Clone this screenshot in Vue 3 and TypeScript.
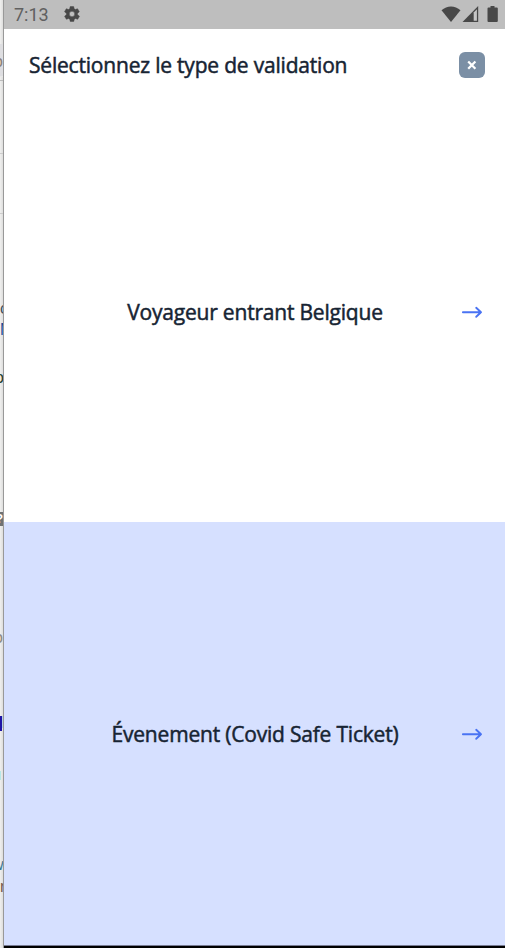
<script setup lang="ts">
interface Choice {
  id: string
  label: string
}

interface Fragment {
  text: string
  top: number
  left: number
  color: string
}

const choices: Choice[] = [
  { id: 'traveller', label: 'Voyageur entrant Belgique' },
  { id: 'event', label: 'Évenement (Covid Safe Ticket)' },
]

// Ends of the lines of the page that lies behind the device window.
const fragments: Fragment[] = [
  { text: 'o', top: 52, left: -6, color: '#8b8178' },
  { text: 'c', top: 299, left: 0, color: '#40505e' },
  { text: 'M', top: 320, left: 0, color: '#174a9c' },
  { text: 'o', top: 368, left: -5, color: '#24402c' },
  { text: 'o', top: 628, left: -6, color: '#8e8a80' },
  { text: 'd', top: 713, left: -6, color: '#1a0fb0' },
  { text: 'w', top: 855, left: -8, color: '#3c7898' },
  { text: 'r', top: 877, left: 0, color: '#76594e' },
]
</script>

<template>
  <div class="desktop">
    <div class="behind" aria-hidden="true">
      <i class="toolbar"></i>
      <i class="panel"></i>
      <i class="divider"></i>
      <span
        v-for="f in fragments"
        :key="f.top"
        class="fragment"
        :style="{ top: f.top + 'px', left: f.left + 'px', color: f.color }"
      >{{ f.text }}</span>
      <b class="help">?</b>
      <i class="mark"></i>
      <i class="cyan"></i>
    </div>

    <main class="phone">
      <div class="status">
        <span class="time">7:13</span>
        <svg class="gear" width="18" height="18" viewBox="0 0 24 24">
          <path fill="#484848" stroke="#484848" stroke-width="0.6" d="M19.4 13a7.8 7.8 0 0 0 0-2l2.1-1.7a.5.5 0 0 0 .1-.6l-2-3.5a.5.5 0 0 0-.6-.2l-2.5 1a7.3 7.3 0 0 0-1.7-1l-.4-2.6a.5.5 0 0 0-.5-.4h-4a.5.5 0 0 0-.5.4L9 5a7.7 7.7 0 0 0-1.7 1l-2.5-1a.5.5 0 0 0-.6.2l-2 3.5a.5.5 0 0 0 .1.6L4.500 11a7.900 7.900 0 0 0 0 2l-2.100 1.700a.5.5 0 0 0-.1.6l2 3.500c.1.2.4.3.6.2l2.500-1a7.300 7.300 0 0 0 1.700 1l.4 2.600c0 .2.2.4.5.4h4c.2 0 .5-.2.5-.4L15 19a7.700 7.700 0 0 0 1.700-1l2.500 1c.2.1.5 0 .6-.2l2-3.500a.5.5 0 0 0-.1-.6zM12 15.600a3.600 3.600 0 1 1 0-7.200 3.600 3.600 0 0 1 0 7.200z" />
        </svg>
        <svg class="signals" width="58" height="18" viewBox="0 0 58 18">
          <path fill="#484848" d="M0.500 4.300C6-.9 14-.9 19.500 4.300L10 16z" />
          <path fill="#484848" d="M21.500 16L37.200 0V16z" />
          <path fill="#c6c6c6" d="M32.700 6.400L35.900 3.200V14.700H32.700z" />
          <path fill="#484848" d="M49.500 0h4v1.500h2.300a1 1 0 0 1 1 1V15a1 1 0 0 1-1 1h-8.300a1 1 0 0 1-1-1V2.500a1 1 0 0 1 1-1h2z" />
        </svg>
      </div>

      <header class="header">
        <h1 class="title">Sélectionnez le type de validation</h1>
        <button class="close" type="button" aria-label="Fermer">
          <svg width="26" height="26" viewBox="0 0 26 26">
            <path d="M9.200 9.500L16.400 16.700M16.400 9.500L9.200 16.700" fill="none" stroke="#fff" stroke-width="2.300" />
          </svg>
        </button>
      </header>

      <section v-for="choice in choices" :key="choice.id" class="choice" :class="choice.id">
        <span class="label">{{ choice.label }}</span>
        <svg class="arrow" width="22" height="14" viewBox="0 0 22 14">
          <path d="M1.900 7.300H20M15.200 2.800L20 7.300L15.200 11.800" fill="none" stroke="#4a73f3" stroke-width="1.900" stroke-linecap="round" stroke-linejoin="round" />
        </svg>
      </section>
      <div class="bottom"></div>
    </main>
  </div>
</template>

<style>
body {
  margin: 0;
  overflow: hidden;
}
</style>

<style scoped>
.desktop {
  display: flex;
  width: 505px;
  height: 948px;
  overflow: hidden;
  background: #fff;
  font-family: 'Open Sans', 'Noto Sans', sans-serif;
}

.behind {
  position: relative;
  flex: none;
  box-sizing: border-box;
  width: 4px;
  overflow: hidden;
  border-right: 1px solid #999;
  background: linear-gradient(90deg, #f0f0ef, #dededd);
}

.behind i,
.fragment,
.help {
  position: absolute;
}

.toolbar {
  top: 44px;
  width: 4px;
  height: 32px;
  background: #dedee1;
  border-bottom: 1px solid #e8e8e8;
}

.panel {
  top: 80px;
  width: 4px;
  height: 74px;
  box-sizing: border-box;
  border-top: 1px solid #bbb;
  border-bottom: 1px solid #ccc;
}

.divider {
  top: 213px;
  width: 4px;
  height: 1px;
  background: #ccc;
}

.fragment {
  font: 16px/20px 'Liberation Sans', Arial, sans-serif;
}

.help {
  top: 512px;
  left: -9px;
  width: 12px;
  height: 14px;
  background: #707273;
  color: #fff;
  font: bold 12px/14px 'Liberation Sans', sans-serif;
  text-align: right;
}

.mark {
  top: 716px;
  width: 2px;
  height: 15px;
  background: #2015a6;
}

.cyan {
  top: 771px;
  width: 1px;
  height: 9px;
  background: #b5e8e8;
}

.phone {
  display: flex;
  flex: 1;
  flex-direction: column;
  min-width: 0;
}

.status {
  display: flex;
  flex: none;
  box-sizing: border-box;
  height: 29px;
  padding: 0 6px 0 10px;
  background: #bebebe;
}

.time {
  width: 49px;
  color: #606060;
  font: 18px/30px Roboto, sans-serif;
  letter-spacing: 0;
}

.gear {
  margin-top: 5px;
}

.signals {
  margin: 6px 0 0 auto;
}

.header {
  display: flex;
  flex: none;
  align-items: center;
  box-sizing: border-box;
  height: 72px;
  padding: 0 20.5px 0 25px;
}

.title,
.label {
  margin: 0;
  color: #172433;
  font-size: 21px;
  font-weight: 400;
  letter-spacing: -0.2px;
  line-height: 28px;
  white-space: nowrap;
  -webkit-text-stroke: 0.5px #172433;
}

.close {
  display: flex;
  width: 26px;
  height: 26px;
  margin-left: auto;
  padding: 0;
  border: 0;
  border-radius: 6px;
  background: #7b8fa5;
}

.choice {
  display: grid;
  flex: none;
  grid-template-columns: 1fr auto;
  align-items: center;
  box-sizing: border-box;
  padding: 0 22px 0 45px;
}

.traveller {
  height: 421px;
}

.event {
  height: 423px;
  background: #d6e0ff;
}

.label {
  justify-self: center;
}

.arrow {
  display: block;
}

.bottom {
  flex: 1;
  box-sizing: border-box;
  border-top: 1px solid #777b92;
  background: #000;
}
</style>
